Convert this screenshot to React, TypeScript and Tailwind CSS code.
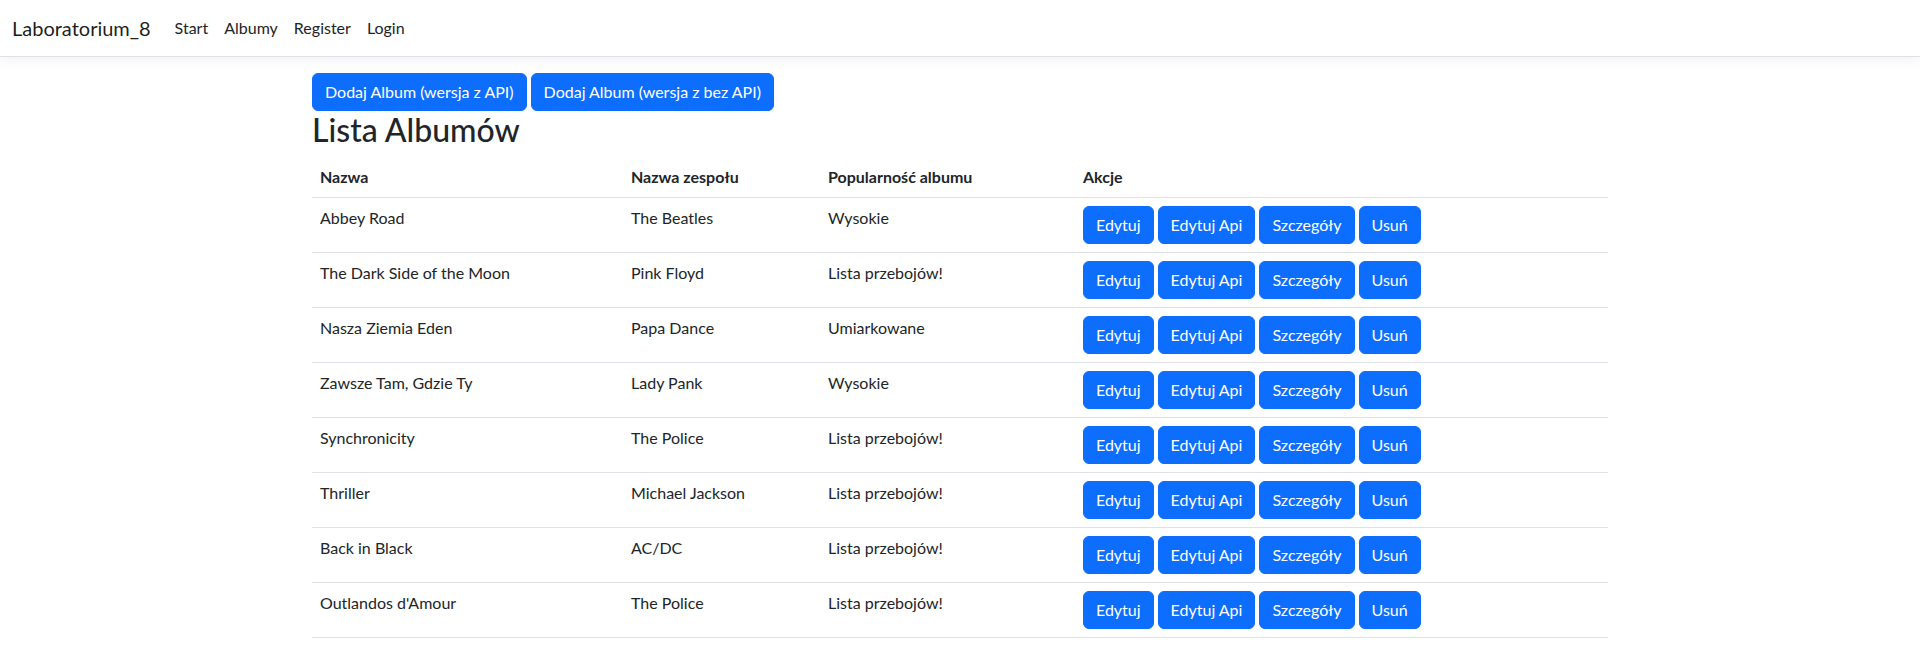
import React from 'react';

type Album = {
  id: number;
  name: string;
  band: string;
  popularity: string;
};

const albums: Album[] = [
  { id: 1, name: 'Abbey Road', band: 'The Beatles', popularity: 'Wysokie' },
  { id: 2, name: 'The Dark Side of the Moon', band: 'Pink Floyd', popularity: 'Lista przebojów!' },
  { id: 3, name: 'Nasza Ziemia Eden', band: 'Papa Dance', popularity: 'Umiarkowane' },
  { id: 4, name: 'Zawsze Tam, Gdzie Ty', band: 'Lady Pank', popularity: 'Wysokie' },
  { id: 5, name: 'Synchronicity', band: 'The Police', popularity: 'Lista przebojów!' },
  { id: 6, name: 'Thriller', band: 'Michael Jackson', popularity: 'Lista przebojów!' },
  { id: 7, name: 'Back in Black', band: 'AC/DC', popularity: 'Lista przebojów!' },
  { id: 8, name: "Outlandos d'Amour", band: 'The Police', popularity: 'Lista przebojów!' },
];

const btn = "rounded-md border border-[#0d6efd] bg-[#0d6efd] px-3 py-1.5 text-white leading-6 cursor-pointer hover:bg-[#0b5ed7]";

const Navbar = () => (
  <nav className="border-b border-[#dee2e6] bg-white shadow-[0_4px_12px_rgba(0,0,0,0.05)]">
    <div className="flex items-center px-3 py-2">
      <a href="#" className="mr-4 py-[5px] text-[20px] leading-[30px] text-black/90">Laboratorium_8</a>
      <ul className="flex">
        {['Start', 'Albumy', 'Register', 'Login'].map((link) => (
          <li key={link}>
            <a href="#" className="block px-2 py-2 leading-6 text-[#212529]">{link}</a>
          </li>
        ))}
      </ul>
    </div>
  </nav>
);

const App = () => {
  return (
    <div className="min-h-screen bg-white text-base text-[#212529] font-['Lato',sans-serif]">
      <Navbar />
      <main className="mx-auto mt-4 w-[1320px] px-3">
        <div className="flex gap-1">
          <button className={btn}>Dodaj Album (wersja z API)</button>
          <button className={btn}>Dodaj Album (wersja z bez API)</button>
        </div>
        <h1 className="mb-2 text-[32px] font-medium leading-[1.2]">Lista Albumów</h1>
        <table className="w-full table-fixed border-collapse align-top">
          <colgroup>
            <col className="w-[311px]" />
            <col className="w-[197px]" />
            <col className="w-[255px]" />
            <col />
          </colgroup>
          <thead>
            <tr className="border-b border-[#dee2e6]">
              <th className="p-2 text-left font-bold leading-6">Nazwa</th>
              <th className="p-2 text-left font-bold leading-6">Nazwa zespołu</th>
              <th className="p-2 text-left font-bold leading-6">Popularność albumu</th>
              <th className="p-2 text-left font-bold leading-6">Akcje</th>
            </tr>
          </thead>
          <tbody>
            {albums.map((album) => (
              <tr key={album.id} className="border-b border-[#dee2e6]">
                <td className="p-2 align-top leading-6">{album.name}</td>
                <td className="p-2 align-top leading-6">{album.band}</td>
                <td className="p-2 align-top leading-6">{album.popularity}</td>
                <td className="p-2 align-top">
                  <div className="flex gap-1">
                    <button className={btn}>Edytuj</button>
                    <button className={btn}>Edytuj Api</button>
                    <button className={btn}>Szczegóły</button>
                    <button className={btn}>Usuń</button>
                  </div>
                </td>
              </tr>
            ))}
          </tbody>
        </table>
      </main>
    </div>
  );
};

export default App;
